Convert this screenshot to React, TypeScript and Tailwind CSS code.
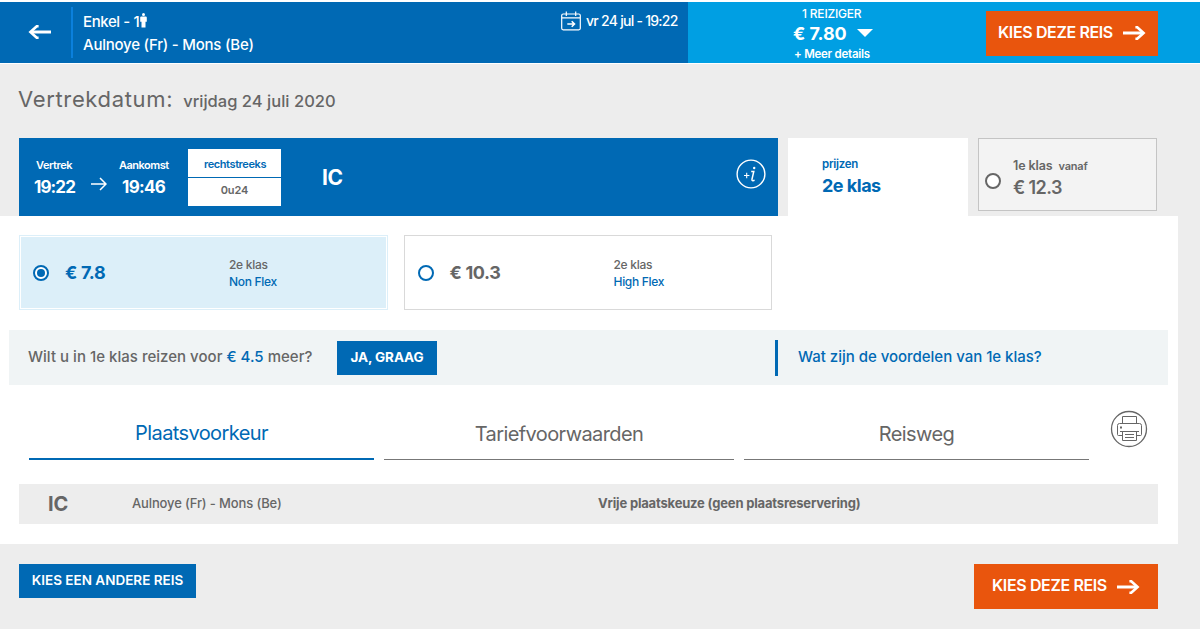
import { useState } from 'react';
import clsx from 'clsx';

function ThickArrow({ className }: { className?: string }) {
  return (
    <svg viewBox="0 0 23 14" className={clsx('shrink-0', className)} fill="none" stroke="currentColor">
      <path d="M0 7H19" strokeWidth="3" />
      <path d="M12.4 1.2H14.2L20.6 7L14.2 12.8H12.4" strokeWidth="2.6" />
    </svg>
  );
}

function CalendarIcon() {
  return (
    <svg width="20" height="20" viewBox="0 0 20 20" fill="none" stroke="currentColor" strokeWidth="1.2">
      <rect x="0.7" y="3" width="18.6" height="15.8" rx="1.5" />
      <path d="M1 6.8H19M5.3 0.5V5M14.7 0.5V5" />
      <path d="M6.3 13H13.3M10.7 10.2L13.5 13L10.7 15.8" strokeWidth="1.6" />
    </svg>
  );
}

function PersonIcon() {
  return (
    <svg width="7" height="15" viewBox="0 0 7 15" fill="currentColor" className="-mt-[3px]">
      <circle cx="3.5" cy="1.5" r="1.5" />
      <path d="M1.3 3.4H5.7Q6.8 3.4 6.8 4.6V8.8H5.5V14.5H1.5V8.8H0.2V4.6Q0.2 3.4 1.3 3.4Z" />
    </svg>
  );
}

function InfoIcon() {
  return (
    <svg width="30" height="30" viewBox="0 0 30 30" fill="none" stroke="currentColor">
      <circle cx="15" cy="15" r="13.9" strokeWidth="1.4" />
      <path d="M8 16.5H13.4M10.7 13.8V19.2" strokeWidth="1.1" />
      <path d="M15.2 12.4H17.8L16 20.2Q15.7 21.8 17 21.7L18.6 21.2" strokeWidth="1.5" />
      <circle cx="18.2" cy="9" r="1.2" fill="currentColor" stroke="none" />
    </svg>
  );
}

function PrinterIcon() {
  return (
    <svg width="38" height="38" viewBox="0 0 38 38" fill="none" stroke="currentColor">
      <circle cx="19" cy="19" r="17.5" strokeWidth="1.3" />
      <path d="M12.5 13.5V6.5H26.5V13.5" />
      <path d="M12 25.5H8.5Q7.5 25.5 7.5 24.5V15.5Q7.5 13.5 9.5 13.5H29.5Q31.5 13.5 31.5 15.5V24.5Q31.5 25.5 30.5 25.5H27" />
      <path d="M10 21.5H29M12.5 21.5V30.5H26.5V21.5M15 24.5H24M15 27.5H24" />
      <path d="M10 17.5H12" strokeWidth="2" />
    </svg>
  );
}

function Radio({ checked, className }: { checked?: boolean; className?: string }) {
  return (
    <span className={clsx('flex size-4 shrink-0 items-center justify-center rounded-full border-2 bg-white', className)}>
      {checked && <span className="size-2 rounded-full bg-[#0069b4]" />}
    </span>
  );
}

const fares = [
  { price: '€ 7.8', name: 'Non Flex' },
  { price: '€ 10.3', name: 'High Flex' },
];

const tabs = [
  { label: 'Plaatsvoorkeur', width: 'w-[345px]' },
  { label: 'Tariefvoorwaarden', width: 'w-[350px]' },
  { label: 'Reisweg', width: 'w-[345px]' },
];

export default function App() {
  const [fare, setFare] = useState(0);
  const [tab, setTab] = useState(0);

  return (
    <div className="h-[637px] w-[1200px] overflow-hidden bg-white pt-0.5 font-['Inter','Liberation_Sans',sans-serif] font-medium text-[#666]">
      <header className="flex h-[61px] text-white">
        <div className="flex w-[688px] bg-[#0069b4]">
          <div className="my-[5px] flex w-[73px] items-center border-r-2 border-[#0b80dc] pb-px pl-7">
            <ThickArrow className="h-3.5 w-[23px] rotate-180" />
          </div>
          <div className="w-[488px] pt-2 pl-2.5 text-[15px] leading-[23px]">
            <div className="flex items-center gap-px">
              <span className="tracking-[-0.4px]">Enkel - 1</span>
              <PersonIcon />
            </div>
            <div className="tracking-[-0.23px] whitespace-nowrap">Aulnoye (Fr) - Mons (Be)</div>
          </div>
          <div className="flex h-5 items-center gap-[5px] pt-[18px]">
            <CalendarIcon />
            <span className="pb-0.5 text-[14px] tracking-[-0.73px] whitespace-nowrap">vr 24 jul - 19:22</span>
          </div>
        </div>
        <div className="flex flex-1 bg-[#009fe3]">
          <div className="w-[298px] pt-[3px] pl-[105px]">
            <div className="pl-[9px] text-[12px] leading-[18px] tracking-[-0.2px]">1 REIZIGER</div>
            <div className="flex h-[21px] items-center gap-2.5 text-[18px] font-bold tracking-[-0.1px]">
              € 7.80
              <svg width="16" height="8" viewBox="0 0 16 8" fill="currentColor" className="-mt-0.5">
                <path d="M0 0H16L8 8Z" />
              </svg>
            </div>
            <div className="pl-px text-[11.5px] leading-5 font-semibold tracking-[-0.25px]">+ Meer details</div>
          </div>
          <button className="mt-[9px] flex h-[45px] w-[172px] items-center bg-[#e9550d] pl-3 text-[16px] font-semibold tracking-[-0.38px]">
            <span className="w-[125px] pb-[3px] text-left whitespace-nowrap">KIES DEZE REIS</span>
            <ThickArrow className="-mt-px h-3.5 w-[23px]" />
          </button>
        </div>
      </header>

      <main className="mt-px h-[565px] bg-[#ededed]">
        <h1 className="flex h-[74px] items-baseline gap-2.5 pt-[19px] pl-[18px] leading-8">
          <span className="text-[22px] font-normal tracking-[0.65px]">Vertrekdatum:</span>
          <span className="text-[16.5px] tracking-[0.02px]">vrijdag 24 juli 2020</span>
        </h1>

        <div className="flex h-[78px] gap-2.5 pl-[19px]">
          <div className="flex h-[77.5px] w-[759px] bg-[#0069b4] text-white">
            <div className="w-[72px] pt-[17px] pl-[15px]">
              <div className="pl-0.5 text-[11px] leading-5 font-semibold tracking-[-0.45px]">Vertrek</div>
              <div className="text-[17px] leading-6 font-bold tracking-[-0.9px]">19:22</div>
            </div>
            <svg width="16" height="14" viewBox="0 0 16 14" fill="none" stroke="currentColor" strokeWidth="1.5" className="mt-[39px]">
              <path d="M0 7H14.5M9 1L15 7L9 13" />
            </svg>
            <div className="w-[81px] pt-[17px] pl-3">
              <div className="text-[11px] leading-5 font-semibold tracking-[-0.5px]">Aankomst</div>
              <div className="pl-[3px] text-[17px] leading-6 font-bold tracking-[-0.7px]">19:46</div>
            </div>
            <div className="mt-[11px] h-[57px] w-[93px] bg-white text-center text-[11px] font-semibold">
              <div className="h-[29px] border-b border-[#0069b4] pl-px leading-[30px] tracking-[-0.4px] text-[#0069b4]">rechtstreeks</div>
              <div className="leading-[25px] tracking-[-0.1px] text-[#666]">0u24</div>
            </div>
            <div className="w-[455px] pt-[26px] pl-[41px] text-[21px] leading-7 font-bold tracking-[-0.5px]">IC</div>
            <div className="pt-[21px]">
              <InfoIcon />
            </div>
          </div>
          <div className="w-[180px] bg-white pt-4 pl-[34px] text-[#0069b4]">
            <div className="text-[11.5px] leading-5 font-semibold tracking-[-0.3px]">prijzen</div>
            <div className="text-[18px] leading-[23px] font-bold tracking-[-0.5px]">2e klas</div>
          </div>
          <div className="flex h-[73px] w-[179px] items-center border border-[#c4c4c4] bg-[#f3f3f3] pt-3 pl-1.5">
            <Radio className="border-[#666]" />
            <div className="pb-[5px] pl-3 whitespace-nowrap">
              <div className="flex items-baseline gap-1.5 text-[12.5px] leading-5 font-semibold tracking-[-0.1px]">
                1e klas <span className="text-[11px] tracking-[-0.2px]">vanaf</span>
              </div>
              <div className="text-[18px] leading-6 font-semibold tracking-[-0.6px]">€ 12.3</div>
            </div>
          </div>
        </div>

        <section className="h-[328px] w-[1178px] bg-white pt-[19px]">
          <div className="flex gap-4 pl-[19px]">
            {fares.map((f, i) => (
              <button
                key={f.name}
                onClick={() => setFare(i)}
                className={clsx(
                  'flex h-[75px] w-[368.5px] items-center border pl-[13px] text-left',
                  fare === i ? 'border-[#dceff9] bg-[#dceff9] ring-1 ring-white ring-inset' : 'border-[#d9d9d9] bg-white'
                )}
              >
                <Radio checked={fare === i} className="border-[#0069b4]" />
                <span className={clsx('w-[178px] pl-4 text-[18px] font-bold tracking-[-0.35px]', fare === i && 'text-[#0069b4]')}>
                  {f.price}
                </span>
                <span className="pt-px pl-0.5 text-[12px] leading-[17px] tracking-[-0.3px]">
                  <span className="block">2e klas</span>
                  <span className="block text-[#0069b4]">{f.name}</span>
                </span>
              </button>
            ))}
          </div>

          <div className="mt-5 ml-[9px] flex h-[55px] w-[1159px] items-center bg-[#f0f4f5] pl-[19px] text-[15px]">
            <p className="w-[309px] tracking-[0.02px] whitespace-nowrap">
              Wilt u in 1e klas reizen voor <span className="text-[#0069b4]">€ 4.5</span> meer?
            </p>
            <button className="h-[34px] w-[100px] bg-[#0069b4] pb-px text-[13.5px] font-bold tracking-[-0.1px] text-white">JA, GRAAG</button>
            <a className="ml-[338px] flex h-9 items-center border-l-[3px] border-[#0069b4] pl-5 tracking-[-0.02px] text-[#0069b4]">
              Wat zijn de voordelen van 1e klas?
            </a>
          </div>

          <div className="mt-[22px] flex gap-2.5 pl-[29px]">
            {tabs.map((t, i) => (
              <button
                key={t.label}
                onClick={() => setTab(i)}
                className={clsx(
                  'h-[53px] text-[20px] font-normal tracking-[-0.6px]',
                  t.width,
                  tab === i ? 'border-b-2 border-[#0069b4] text-[#0069b4]' : 'border-b border-[#777] pt-px'
                )}
              >
                {t.label}
              </button>
            ))}
            <div className="mt-[3px] ml-[11px]">
              <PrinterIcon />
            </div>
          </div>

          <div className="mt-6 ml-[19px] flex h-10 w-[1139px] items-center bg-[#ededed] pb-px text-[13px]">
            <span className="w-[113px] pl-[29px] text-[20px] font-bold">IC</span>
            <span className="w-[466px] tracking-[-0.13px]">Aulnoye (Fr) - Mons (Be)</span>
            <span className="font-bold tracking-[-0.18px]">Vrije plaatskeuze (geen plaatsreservering)</span>
          </div>
        </section>

        <footer className="flex justify-between pt-5 pr-[42px] pl-[19px] text-white">
          <button className="h-[34px] w-[177px] bg-[#0069b4] pb-0.5 text-[13.5px] font-semibold">KIES EEN ANDERE REIS</button>
          <button className="flex h-[45px] w-[184px] items-center bg-[#e9550d] pl-[18px] text-[16px] font-semibold tracking-[-0.38px]">
            <span className="w-[125px] pb-[3px] text-left whitespace-nowrap">KIES DEZE REIS</span>
            <ThickArrow className="h-3.5 w-[23px]" />
          </button>
        </footer>
      </main>
    </div>
  );
}
